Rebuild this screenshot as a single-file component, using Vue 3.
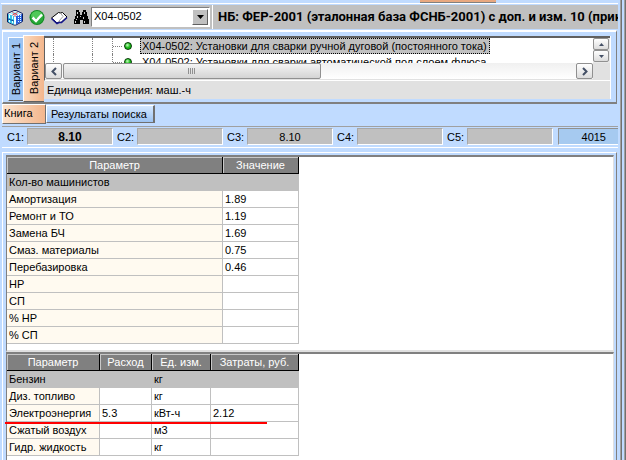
<script setup>
import { ref } from 'vue'

const code = ref('X04-0502')
const variants = ['Вариант 1', 'Вариант 2']
const nodes = [
  'X04-0502: Установки для сварки ручной дуговой (постоянного тока)',
  'X04-0502: Установки для сварки автоматической под слоем флюса',
]
const fields = ref([
  { id: 'c1', label: 'C1:', value: '8.10', bold: true },
  { id: 'c2', label: 'C2:', value: '' },
  { id: 'c3', label: 'C3:', value: '8.10' },
  { id: 'c4', label: 'C4:', value: '' },
  { id: 'c5', label: 'C5:', value: '' },
])
const params = [
  ['Кол-во машинистов', ''],
  ['Амортизация', '1.89'],
  ['Ремонт и ТО', '1.19'],
  ['Замена БЧ', '1.69'],
  ['Смаз. материалы', '0.75'],
  ['Перебазировка', '0.46'],
  ['НР', ''],
  ['СП', ''],
  ['% НР', ''],
  ['% СП', ''],
]
const resources = [
  ['Бензин', '', 'кг', ''],
  ['Диз. топливо', '', 'кг', ''],
  ['Электроэнергия', '5.3', 'кВт-ч', '2.12'],
  ['Сжатый воздух', '', 'м3', ''],
  ['Гидр. жидкость', '', 'кг', ''],
]
</script>

<template>
  <div class="window">
    <main class="client">
      <div class="topstrip"><span class="topstrip-left"></span><span class="topstrip-tab"></span></div>

      <header class="toolbar">
        <button class="tool" aria-label="База">
          <svg width="16" height="17" viewBox="0 0 16 17">
            <path d="M0.500 4.500 7 1.500h2l6.500 3v8L9 16H7L0.500 13z" fill="#fff" stroke="#0c1c5c" />
            <path d="M1 5l6 2v8.500L1 13z" fill="#35c4ea" />
            <path d="M9 7l6-2v7.500l-6 3z" fill="#2a62e0" />
            <path d="M3 4.500 8 2.500l5 2-5 2z" fill="#9af0fa" />
            <path d="M2.500 6v7.500M5.500 7v8" stroke="#e6ffff" stroke-dasharray="3 1" />
            <path d="M11.500 6v8M13.500 6v8" stroke="#e6ffff" stroke-dasharray="1 1" />
            <path d="M8 6.500v9" stroke="#e6ffff" />
            <path d="M1 10l6 2" stroke="#0c50a0" fill="none" />
            <path d="M5.500 3.500l5 2.500M10.500 3.500l-5 2.500M8 6v2" stroke="#e04858" fill="none" />
          </svg>
        </button>
        <button class="tool" aria-label="Применить">
          <svg width="16" height="17" viewBox="0 0 16 17">
            <circle cx="8" cy="8.500" r="7.500" fill="#108a20" />
            <circle cx="8" cy="8.500" r="6.500" fill="#27a838" />
            <path d="M2 7.500a6 5.500 0 0 1 12 0c-3 2-8 2-12 0z" fill="#50c858" />
            <path d="M3.500 8.500 7 12l6-6.500" stroke="#fff" stroke-width="2.500" fill="none" />
          </svg>
        </button>
        <button class="tool" aria-label="Книга">
          <svg width="17" height="17" viewBox="0 0 17 17">
            <path d="M0.500 9 7.500 3.500 9.500 4l2-.5 4.500 4.500-6 5.500-2-.5-2 1z" fill="#fff" stroke="#000" />
            <path d="M0.500 9.500 6 14.500l2-1h2.500L16 8.500" fill="none" stroke="#14148c" stroke-width="1.500" />
            <path d="M9.500 4 12 7.500 8 12" fill="none" stroke="#a0a0a0" />
          </svg>
        </button>
        <button class="tool" aria-label="Поиск">
          <svg width="16" height="17" viewBox="0 0 16 17">
            <path d="M3 1h3v2h1v3h2V3h1V1h3v2h1v4h1v3h1v5h-6v-4H7v4H1v-5h1V7h1z" fill="#000" />
            <path d="M4.500 3v2M11.500 3v2M4.500 7v2M3.500 10v1M2.500 12v2M10.500 8v2M11.500 12v2M7.500 7v1" stroke="#c8c8c8" fill="none" />
          </svg>
        </button>
        <div class="combo">
          <select v-model="code" aria-label="Шифр">
            <option>X04-0502</option>
          </select>
          <span class="combo-arrow"><svg width="7" height="4" viewBox="0 0 7 4"><path d="M0 0h7L3.500 4z" /></svg></span>
        </div>
        <h1 class="base-name">НБ: ФЕР-2001 (эталонная база ФСНБ-2001) с доп. и изм. 10 (прик</h1>
      </header>

      <section class="variant-panel">
        <nav class="vtabs">
          <button v-for="(v, i) in variants" :key="v" class="vtab" :class="{ active: i === 1 }"><span>{{ v }}</span></button>
        </nav>
        <div class="variant-body">
          <div class="scroller">
            <div class="tree-row">
              <ul class="tree">
                <li v-for="(n, i) in nodes" :key="n" class="node" :class="{ selected: i === 0 }">
                  <i class="guide g1"></i><i class="guide g2"></i><i class="guide g3"></i>
                  <i class="branch"></i><i class="dot"></i><span class="node-text">{{ n }}</span>
                </li>
              </ul>
              <div class="vscroll">
                <button aria-label="Вверх"><svg width="5" height="3" viewBox="0 0 5 3"><path d="M0 3 2.500 0 5 3z" /></svg></button>
                <button aria-label="Вниз"><svg width="5" height="3" viewBox="0 0 5 3"><path d="M0 0h5L2.500 3z" /></svg></button>
              </div>
            </div>
            <div class="hscroll">
              <div class="htrack">
                <button class="hbtn" aria-label="Влево"><svg width="6" height="9" viewBox="0 0 6 9"><path d="M5 1 1.500 4.500 5 8" /></svg></button>
                <div class="thumb"><i></i><i></i><i></i><i></i></div>
                <button class="hbtn last" aria-label="Вправо"><svg width="6" height="9" viewBox="0 0 6 9"><path d="M1 1l3.500 3.500L1 8" /></svg></button>
              </div>
            </div>
          </div>
          <p class="unit">Единица измерения: маш.-ч</p>
        </div>
      </section>

      <nav class="tabs">
        <button class="tab active">Книга</button>
        <button class="tab">Результаты поиска</button>
      </nav>

      <form class="fields">
        <template v-for="f in fields" :key="f.id">
          <label :for="f.id">{{ f.label }}</label>
          <input :id="f.id" v-model="f.value" :class="{ bold: f.bold }" readonly>
        </template>
        <output class="total">4015</output>
      </form>

      <section class="grids">
        <div class="grid-panel first">
          <table class="params">
            <colgroup><col class="w216"><col class="w76"></colgroup>
            <thead><tr><th>Параметр</th><th>Значение</th></tr></thead>
            <tbody>
              <tr v-for="(r, i) in params" :key="r[0]" :class="{ current: i === 0 }">
                <td v-for="(c, j) in r" :key="j">{{ c }}</td>
              </tr>
            </tbody>
          </table>
        </div>
        <div class="grid-panel second">
          <table class="resources">
            <colgroup><col class="w93"><col class="w52"><col class="w59"><col class="w88"></colgroup>
            <thead><tr><th>Параметр</th><th>Расход</th><th>Ед. изм.</th><th>Затраты, руб.</th></tr></thead>
            <tbody>
              <tr v-for="(r, i) in resources" :key="r[0]" :class="{ current: i === 0, marked: i === 2 }">
                <td v-for="(c, j) in r" :key="j">{{ c }}</td>
              </tr>
            </tbody>
          </table>
        </div>
      </section>
    </main>
    <div class="frame"></div>
  </div>
</template>

<style>
body {
  background: #c0dbff;
  overflow: hidden;
}
</style>

<style scoped>
* {
  box-sizing: border-box;
}
.window {
  display: flex;
  height: 100vh;
  background: #c0dbff;
  color: #000;
  font: 11px/16px "Liberation Sans", Arial, sans-serif;
}
button, input, select {
  font: inherit;
  color: inherit;
  margin: 0;
  padding: 0;
  border: 0;
  border-radius: 0;
}
.client {
  flex: 1;
  min-width: 0;
  display: flex;
  flex-direction: column;
  padding-left: 1px;
}
.frame {
  width: 8px;
  flex: none;
  background: linear-gradient(to right, #c0dbff 2px, #a0a0a0 2px 3px, #707070 3px 4px, #c0dbff 4px 6px, #a0a0a0 6px 7px, #707070 7px);
}
.topstrip {
  display: flex;
  height: 4px;
  border-bottom: 1px solid #fff;
}
.topstrip-left {
  width: 419px;
}
.topstrip-tab {
  width: 76px;
  height: 3px;
  background: #e8a880;
  border-bottom: 1px solid #808080;
}

/* toolbar */
.toolbar {
  display: flex;
  align-items: center;
  height: 24px;
  margin: 1px 0 0 1px;
  padding-left: 5px;
  background: #c0c0c0;
  overflow: hidden;
}
.tool {
  flex: none;
  width: 22px;
  height: 17px;
  background: none;
  text-align: left;
}
.tool svg {
  display: block;
}
.combo {
  flex: none;
  display: flex;
  width: 119px;
  height: 20px;
  margin-left: -4px;
  border: 1px solid #808080;
  border-right-color: #fff;
  border-bottom-color: #fff;
  background: #fff;
  position: relative;
}
.combo select {
  flex: 1;
  min-width: 0;
  appearance: none;
  background: #fff;
  padding: 0 0 2px 2px;
}
.combo-arrow {
  position: absolute;
  inset: 1px 1px 1px auto;
  width: 16px;
  display: flex;
  align-items: center;
  justify-content: center;
  background: #c0c0c0;
  border: 1px solid #fff;
  border-right-color: #606060;
  border-bottom-color: #606060;
  pointer-events: none;
}
.base-name {
  flex: 1;
  min-width: 0;
  height: 24px;
  margin: 0 0 0 2px;
  padding: 0 0 0 5px;
  border-left: 1px solid #fff;
  overflow: hidden;
  white-space: nowrap;
  font-family: Roboto, "Liberation Sans", sans-serif;
  font-size: 13px;
  line-height: 24px;
}

/* variants */
.variant-panel {
  display: flex;
  height: 74px;
  margin: 1px 1px 0 1px;
  padding: 4px 4px 0 5px;
  border: 1px solid #808080;
  border-top: 2px solid #fff;
  border-left-color: #fff;
  border-bottom: 2px solid #808080;
}
.vtabs {
  display: flex;
  padding-top: 1px;
}
.vtab {
  width: 15px;
  height: 64px;
  background: #9cc3f2;
  border-top: 1px solid #fff;
  border-left: 1px solid #fff;
  border-bottom: 1px solid #606060;
  display: flex;
  justify-content: center;
  align-items: center;
}
.vtab.active {
  width: 21px;
  height: 67px;
  margin-top: -2px;
  background: linear-gradient(to right, #fbd9bd, #f3b68c);
}
.vtab span {
  writing-mode: vertical-rl;
  transform: rotate(180deg);
  line-height: 14px;
  white-space: nowrap;
}
.variant-body {
  flex: 1;
  min-width: 0;
  margin-right: 1px;
  border-right: 1px solid #fff;
  background: #e1e1e1;
  height: 63px;
}
.scroller {
  border-top: 2px solid #606060;
  border-left: 1px solid #606060;
  border-bottom: 1px solid #fff;
  height: 45px;
  background: #fff;
}
.tree-row {
  display: flex;
  height: 25px;
}
.tree {
  flex: 1;
  min-width: 0;
  margin: 0;
  padding: 0;
  list-style: none;
  overflow: hidden;
}
.node {
  display: flex;
  align-items: center;
  height: 16px;
}
.guide {
  flex: none;
  height: 16px;
  border-left: 1px dotted #808080;
}
.g1 { width: 39px; margin-left: 8px; }
.g2 { width: 20px; }
.g3 { width: 1px; }
.branch {
  width: 9px;
  border-top: 1px dotted #808080;
}
.dot {
  flex: none;
  width: 8px;
  height: 8px;
  margin: 0 8px 0 2px;
  border: 1px solid #003800;
  border-radius: 50%;
  background: radial-gradient(circle at 40% 35%, #c8ffc0, #18b818 50%);
}
.node-text {
  padding: 0 2px 0 1px;
  border: 1px solid transparent;
  line-height: 14px;
  white-space: nowrap;
}
.selected .node-text {
  background: #c0c0c0;
  border: 1px dotted #000;
}
.vscroll {
  width: 17px;
  display: flex;
  flex-direction: column;
  background: #e8e8e8;
}
.vscroll button, .hbtn, .thumb {
  background: linear-gradient(#fff, #dcdcdc);
  border: 1px solid #909090;
  border-radius: 2px;
  display: flex;
  align-items: center;
  justify-content: center;
}
.vscroll button {
  width: 16px;
  height: 12px;
}
.vscroll svg {
  fill: #445066;
}
.hscroll {
  height: 17px;
  padding-right: 17px;
  background: #e1e1e1;
}
.htrack {
  display: flex;
  height: 16px;
  background: linear-gradient(#f0f0f0, #fff);
}
.hbtn {
  width: 17px;
  height: 16px;
}
.hbtn svg {
  fill: none;
  stroke: #445066;
  stroke-width: 2;
}
.hbtn.last {
  margin-left: auto;
}
.thumb {
  width: 47%;
  gap: 1px;
  margin-left: 1px;
  background: linear-gradient(#f4f4f4, #d4d4d4);
}
.thumb i {
  width: 1px;
  height: 6px;
  background: #909090;
}
.unit {
  margin: 0;
  padding-left: 3px;
  line-height: 18px;
}

/* tabs */
.tabs {
  display: flex;
  align-items: flex-start;
  height: 22px;
  padding-left: 1px;
}
.tab {
  height: 18px;
  margin-top: 1px;
  padding: 0 6px 0 4px;
  background: linear-gradient(#d4e8ff, #9cc3f2);
  border-top: 1px solid #fff;
  border-left: 1px solid #fff;
  border-right: 2px solid #707070;
  border-bottom: 1px solid #707070;
}
.tab.active {
  width: 44px;
  height: 20px;
  margin-top: 0;
  padding: 0 0 2px 1px;
  text-align: left;
  background: linear-gradient(to right, #fde3cd, #f3b68c);
  border-right-width: 1px;
}

/* totals */
.fields {
  display: flex;
  height: 22px;
  margin-left: 1px;
  padding: 1px 0 2px 5px;
  border-top: 1px solid #a0a0a0;
  border-bottom: 1px solid #fff;
}
.fields label {
  width: 20px;
  flex: none;
  line-height: 19px;
}
.fields input {
  flex: 0 1 86px;
  min-width: 20px;
  margin-right: 4px;
  background: #c0c0c0;
  border: 1px solid #a8a8a8;
  border-right-color: #fff;
  border-bottom-color: #fff;
  text-align: center;
}
.fields .bold {
  font-weight: bold;
  font-size: 12px;
}
.total {
  flex: 1;
  margin-left: 1px;
  padding-right: 12px;
  background: #a6caf0;
  border: 1px solid #909090;
  border-right: 0;
  border-bottom-color: #fff;
  text-align: right;
  line-height: 17px;
}

/* grids */
.grids {
  flex: 1;
  min-height: 0;
  display: flex;
  flex-direction: column;
  margin: 4px 1px 0 1px;
  padding: 2px 2px 0 3px;
  border-top: 1px solid #fff;
  border-left: 1px solid #fff;
  border-right: 1px solid #808080;
}
.grid-panel {
  background: #fff;
  border-top: 2px solid #808080;
  border-left: 1px solid #808080;
  border-right: 1px solid #e0e0e0;
}
.first {
  flex: none;
  padding-bottom: 6px;
  border-bottom: 2px solid #e0e0e0;
}
.second {
  flex: 1;
}
table {
  table-layout: fixed;
  border-collapse: separate;
  border-spacing: 0;
  width: 292px;
}
.w216 { width: 216px; }
.w76 { width: 76px; }
.w93 { width: 93px; }
.w52 { width: 52px; }
.w59 { width: 59px; }
.w88 { width: 88px; }
th {
  height: 17px;
  padding: 0;
  background: #808080;
  color: #fff;
  font-weight: normal;
  line-height: 15px;
  border-right: 1px solid #000;
  border-bottom: 1px solid #000;
  box-shadow: inset 1px 1px 0 #c8c8c8;
}
td {
  height: 17px;
  padding: 0 0 0 2px;
  line-height: 16px;
  border-right: 1px solid #c0c0c0;
  border-bottom: 1px solid #c0c0c0;
  white-space: nowrap;
}
td:first-child {
  background: #fffaf0;
}
.current td, .current td:first-child {
  background: #c0c0c0;
}
.marked {
  position: relative;
}
.marked::after {
  content: "";
  position: absolute;
  left: -2px;
  bottom: -2px;
  width: 262px;
  height: 2px;
  background: #f00;
}
</style>
